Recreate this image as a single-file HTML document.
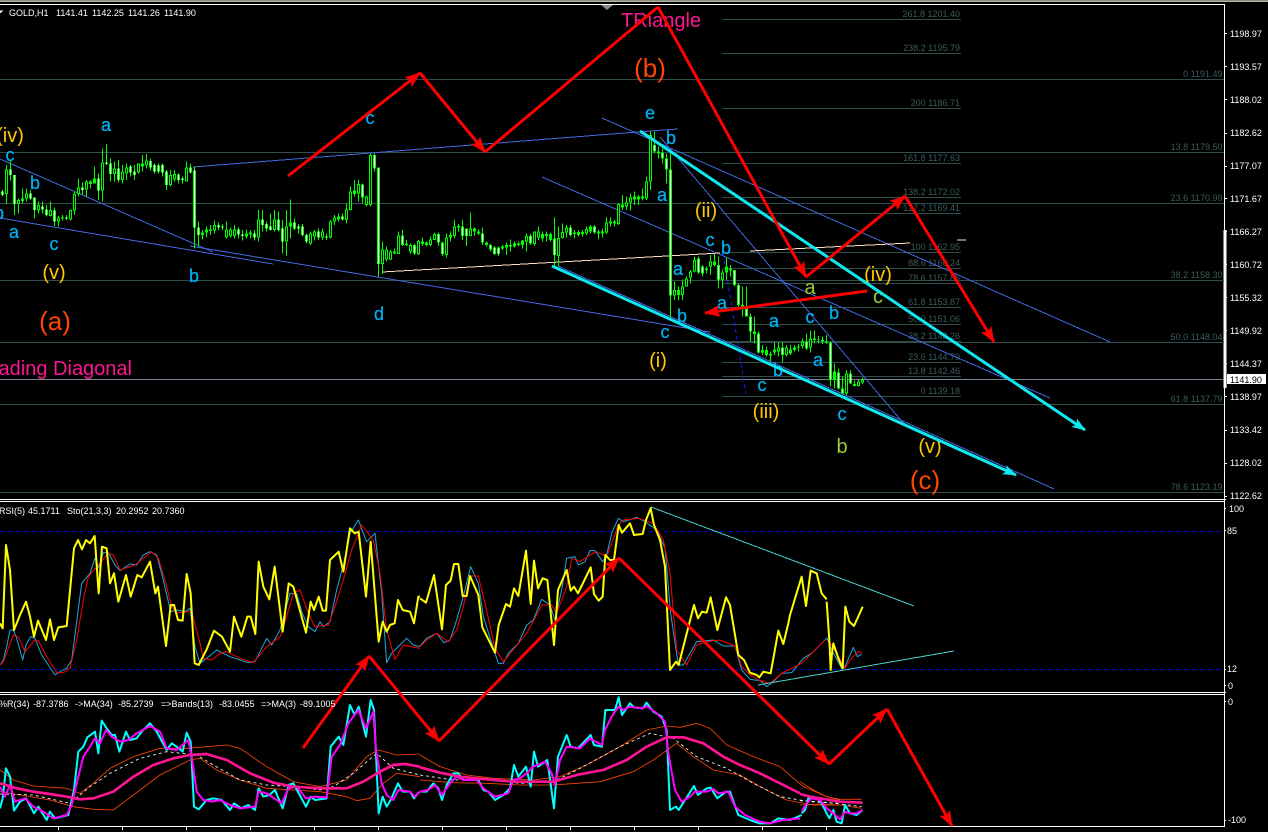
<!DOCTYPE html>
<html><head><meta charset="utf-8"><title>GOLD,H1</title>
<style>
html,body{margin:0;padding:0;background:#000;width:1268px;height:832px;overflow:hidden}
svg{display:block;position:absolute;left:0;top:0}
text{font-family:"Liberation Sans",Arial,sans-serif}
.s{font-size:9px;fill:#fff}
.f{font-size:9px;fill:#3a5c5c;text-anchor:end}
.l{font-size:18px;text-anchor:middle}
.bl{fill:#00b0f5;stroke:#00b0f5;stroke-width:.25px}
.y{fill:#ffc800;font-size:20px}
.o{fill:#ff4500;font-size:26px}
.g{fill:#9acd32}
.p{fill:#ff1493;font-size:20px}
.ln{fill:none;shape-rendering:crispEdges}
.aa{fill:none;stroke-linejoin:round}
</style></head><body>
<svg width="1268" height="832" viewBox="0 0 1268 832" xmlns="http://www.w3.org/2000/svg">
<defs>
<marker id="ar" markerUnits="userSpaceOnUse" markerWidth="18" markerHeight="14" refX="15" refY="6" orient="auto"><path d="M0 0L16 6L0 12L3 6z" fill="#f00"/></marker>
<marker id="ac" markerUnits="userSpaceOnUse" markerWidth="18" markerHeight="14" refX="13" refY="5" orient="auto"><path d="M0 0L14 5L0 10L3 5z" fill="#10e8f0"/></marker>
<clipPath id="cm"><rect x="0" y="5" width="1224" height="494"/></clipPath>
<clipPath id="c2"><rect x="0" y="502" width="1224" height="190"/></clipPath>
<clipPath id="c3"><rect x="0" y="695" width="1224" height="131"/></clipPath>
</defs>
<rect width="1268" height="832" fill="#000"/>
<rect width="1268" height="1" fill="#8f8c80"/><rect y="1" width="1268" height="1" fill="#b5b2a6"/>

<!-- frames -->
<g class="ln" stroke="#fff" stroke-width="1">
<path d="M0 4.5H1224.5V826.5H0"/>
<path d="M0 499.5H1226M0 501.5H1224M0 692.5H1226M0 694.5H1224"/>
<path d="M1224 33.5h3M1224 66.5h3M1224 99.5h3M1224 133.5h3M1224 166.5h3M1224 198.5h3M1224 231.5h3M1224 264.5h3M1224 297.5h3M1224 330.5h3M1224 363.5h3M1224 396.5h3M1224 430.5h3M1224 463.5h3M1224 496.5h3M1224 508.5h2M1224 530.5h2M1224 669.5h2M1224 685.5h2M1224 701.5h2M1224 820.5h2"/>
<path d="M58.500 826v4M122.500 826v4M186.500 826v4M250.500 826v4M314.500 826v4M378.500 826v4M442.500 826v4M506.500 826v4M570.500 826v4M634.500 826v4M698.500 826v4M762.500 826v4M826.500 826v4"/>
</g>
<rect x="1223.500" y="230" width="3" height="158" fill="#fff"/>

<!-- fibs -->
<g class="ln" stroke="#2f4f4f" stroke-width="1">
<path d="M0 79.500H1224M0 152.500H1224M0 203.500H1224M0 280.500H1224M0 342.500H1224M0 404.500H1224M0 492.500H1224"/>
<path d="M722 19.500H961M722 53.500H961M722 108.500H961M722 163.500H961M722 197.500H961M722 213.500H961M722 252.500H961M722 268.500H961M722 283.500H961M722 307.500H961M722 324.500H961M722 341.500H961M722 362.500H961M722 376.500H961M722 396.500H961"/>
</g>
<path class="ln" stroke="#778899" d="M0 379.500H1224"/>
<path d="M601 5h12l-6 5z" fill="#8a8a8a"/>

<g class="f">
<text x="1222.500" y="77">0 1191.49</text><text x="1222.500" y="150">13.8 1179.50</text><text x="1222.500" y="201">23.6 1170.99</text><text x="1222.500" y="278">38.2 1158.30</text><text x="1222.500" y="340">50.0 1148.04</text><text x="1222.500" y="402">61.8 1137.79</text><text x="1222.500" y="490">78.6 1123.19</text>
<text x="960" y="17">261.8 1201.40</text><text x="960" y="51">238.2 1195.79</text><text x="960" y="106">200 1186.71</text><text x="960" y="161">161.8 1177.63</text><text x="960" y="195">138.2 1172.02</text><text x="960" y="211">127.2 1169.41</text><text x="960" y="250">100 1162.95</text><text x="960" y="266">88.6 1160.24</text><text x="960" y="281">78.6 1157.85</text><text x="960" y="305">61.8 1153.87</text><text x="960" y="322">50.0 1151.06</text><text x="960" y="339">38.2 1148.26</text><text x="960" y="360">23.6 1144.79</text><text x="960" y="374">13.8 1142.46</text><text x="960" y="394">0 1139.18</text>
</g>

<g clip-path="url(#cm)">
<!-- thin trendlines -->
<g class="ln" stroke="#4169e1" stroke-width="1">
<path d="M0 159L213 252"/><path d="M0 218L273 264"/><path d="M190 246L710 332"/>
<path d="M193 167L650 131L678 129"/><path d="M602 118L1110 342"/><path d="M660 137L905 425"/>
<path d="M542 177L1050 398"/><path d="M558 266L1054 489"/>
</g>
<path class="ln" stroke="#1a1aff" stroke-dasharray="4 3" d="M723 253L746 394"/>
<path class="ln" stroke="#ffdfc0" d="M382 272L720 253M750 251L910 243M957 240H966"/>

<!-- candles: first stretch -->
<g transform="translate(-.167 0) scale(.33333)" class="ln">
<path stroke="#0f0" stroke-width="3" d="M8 570V590M20 495V612M32 480V542M44 525V645M56 595V640M68 565V610M80 565V605M92 570V600M104 592V655M116 605V640M128 605V640M140 615V650M152 605V650M164 622V678M176 648V680M188 645V662M200 645V660M212 628V662M224 575V645M236 535V590M248 548V585M260 540V590M272 540V565M284 500V550M296 520V600M308 445V605M320 432V495M332 475V545M344 485V545M356 480V548M368 495V550M380 490V540M392 495V530M404 495V540M416 490V520M428 465V515M440 462V505M452 475V512M464 490V520M476 490V520M488 490V530M500 510V570M512 510V560M524 510V545M536 520V550M548 530V550M560 485V545M572 490V520M584 500V745M596 665V740M608 690V718M620 680V712M632 675V705M644 662V700M656 668V690M668 672V690M680 665V715M692 682V712M704 675V715M716 682V715M728 690V722M740 688V715M752 690V715M764 690V722M776 630V725M788 630V695M800 665V695M812 640V692M824 630V695M836 635V695M848 660V760M860 630V768M872 598V715M884 655V690M896 672V700M908 672V710M920 700V730M932 695V735M944 690V722M956 685V720M968 685V720M980 700V720M992 660V715M1004 645V675M1016 640V665M1028 640V662M1040 610V670M1052 560V632M1064 540V590M1076 538V605"/>
<path id="u1" stroke="#0f0" stroke-width="10" d="M20 508V582M56 600V612M68 595V603M80 580V595M116 615V632M152 630V648M176 652V665M188 652V656M212 630V658M224 582V632M236 562V582M260 545V568M272 545V552M284 535V550M308 487V572M344 505V522M368 515V540M380 502V520M416 490V518M428 490V500M440 482V497M512 525V555M524 522V538M560 502V545M608 697V705M620 688V698M632 688V693M644 675V692M680 688V712M692 688V708M704 688V708M740 700V710M752 697V703M776 658V712M824 658V690M860 680V725M872 668V680M932 700V730M944 695V710M968 695V712M992 665V713M1004 652V665M1016 650V658M1040 628V660M1052 575V630M1064 572V582M1076 552V580"/>
<path stroke="#000" stroke-width="3" d="M20 511V579M56 603V609M80 583V592M116 618V629M152 633V645M176 655V662M212 633V655M224 585V629M236 565V579M260 548V565M308 490V569M344 508V519M368 518V537M380 505V517M416 493V515M440 485V494M512 528V552M524 525V535M560 505V542M644 678V689M680 691V709M692 691V705M704 691V705M776 661V709M824 661V687M860 683V722M932 703V727M944 698V707M968 698V709M992 668V710M1004 655V662M1040 631V657M1052 578V627M1076 555V577"/>
<path stroke="#0f0" stroke-width="10" d="M8 575V585M32 508V525M44 525V612M92 580V595M104 592V630M128 620V628M140 628V645M164 632V665M200 652V655M248 562V570M296 535V572M320 487V492M332 490V522M356 505V540M392 500V518M404 515V525M452 483V503M464 495V515M476 497V515M488 495V518M500 515V555M536 524V540M548 535V540M572 502V517M584 512V682M596 682V705M656 675V682M668 680V683M716 688V703M728 703V708M764 700V713M788 658V675M800 672V685M812 680V690M836 658V690M848 685V725M884 668V685M896 680V685M908 680V705M920 705V725M956 695V712M980 710V713M1028 650V658"/>
<path stroke="#fff" stroke-width="3" d="M8 575V585M32 508V525M44 525V612M92 580V595M104 592V630M128 620V628M140 628V645M164 632V665M200 652V655M248 562V570M296 535V572M320 487V492M332 490V522M356 505V540M392 500V518M404 515V525M452 483V503M464 495V515M476 497V515M488 495V518M500 515V555M536 524V540M548 535V540M572 502V517M584 512V682M596 682V705M656 675V682M668 680V683M716 688V703M728 703V708M764 700V713M788 658V675M800 672V685M812 680V690M836 658V690M848 685V725M884 668V685M896 680V685M908 680V705M920 705V725M956 695V712M980 710V713M1028 650V658"/>
</g>

<!-- candles: middle stretch -->
<g transform="translate(359.833 130) scale(.33333)" class="ln">
<path stroke="#0f0" stroke-width="3" d="M8 160V220M20 197V230M32 70V230M44 70V125M56 112V440M68 335V432M80 350V395M92 360V390M104 355V372M116 305V372M128 300V348M140 330V348M152 340V372M164 340V375M176 330V375M188 322V348M200 335V350M212 320V348M224 308V330M236 308V348M248 335V378M260 310V382M272 305V335M284 270V325M296 282V305M308 270V330M320 295V348M332 248V318M344 292V318M356 298V315M368 292V345M380 335V350M392 342V365M404 348V375M416 350V378M428 345V360M440 338V375M452 328V365M464 335V352M476 335V350M488 330V355M500 310V365M512 312V345M524 304V348M536 290V330M548 305V335M560 305V335M572 308V335M584 262V410M596 290V408M608 280V325M620 285V322M632 285V320M644 300V325M656 300V320M668 300V320M680 290V315M692 285V310M704 285V312M716 300V328M728 295V322M740 262V312M752 262V290M764 270V290M776 220V285M788 195V240M800 200V240M812 190V242M824 185V225M836 195V225M848 175V212"/>
<path stroke="#0f0" stroke-width="10" d="M8 163V203M20 200V225M32 75V225M44 75V115M56 112V402M68 358V402M80 358V388M92 365V388M104 365V370M116 316V372M128 316V345M140 340V345M152 345V365M164 345V370M176 333V372M188 335V342M200 338V345M212 328V345M224 312V330M236 312V338M248 338V372M260 322V375M272 315V322M284 290V318M296 288V292M308 290V318M320 295V318M332 295V318M344 295V305M356 305V310M368 310V338M380 338V345M392 345V358M404 352V372M416 352V372M428 350V355M440 345V352M452 345V350M464 340V350M476 340V345M488 332V345M500 318V335M512 318V340M524 304V342M536 304V322M548 312V325M560 312V318M572 312V330M584 326V375M596 324V378M608 306V324M620 292V308M632 292V315M644 308V312M656 306V315M668 306V312M680 297V310M692 290V305M704 290V308M716 305V310M728 305V310M740 277V308M752 275V280M764 275V280M776 222V282M788 223V232M800 218V230M812 202V218M824 200V208M836 200V208M848 200V205"/>
<path stroke="#000" stroke-width="3" d="M20 203V222M32 78V222M68 361V399M80 361V385M92 368V385M116 319V369M152 348V362M176 336V369M212 331V342M224 315V327M260 325V372M284 293V315M332 298V315M500 321V332M524 307V339M536 307V319M596 327V375M608 309V321M620 295V305M680 300V307M740 280V305M776 225V279M800 221V227M812 205V215"/>
<path stroke="#fff" stroke-width="3" d="M8 165V200M44 78V112M56 114V400M128 320V342M164 348V367M236 315V335M248 340V370M308 292V315M320 297V316M368 312V336M392 347V356M404 354V370M416 354V370M512 320V338M584 328V373M632 294V313M704 292V306"/>
</g>

<!-- candles: last stretch -->
<g transform="translate(639.833 120) scale(.33333)" class="ln">
<path stroke="#0f0" stroke-width="3" d="M8 205V238M20 170V240M32 35V210M44 35V100M56 80V115M68 85V130M80 100V190M92 95V595M104 485V540M116 500V542M128 478V540M140 470V500M152 450V490M164 410V458M176 410V462M188 435V470M200 440V460M212 405V465M224 400V440M236 410V505M248 450V505M260 412V480M272 435V470M284 450V500M296 490V570M308 500V590M320 500V590M332 580V665M344 590V670M356 635V700M368 675V705M380 680V710M392 695V725M404 668V705M416 668V710M428 668V728M440 675V710M452 675V705M464 675V695M476 672V695M488 655V685M500 640V690M512 632V698M524 632V670M536 648V670M548 650V672M560 645V672M572 665V800M584 730V805M596 745V808M608 770V822M620 750V825M632 750V792M644 782V800M656 780V800M668 772V792"/>
<path stroke="#0f0" stroke-width="10" d="M8 230V235M20 185V235M32 45V185M44 75V95M56 95V100M68 97V115M80 115V148M92 148V527M104 510V527M116 510V525M128 500V525M140 475V500M152 455V472M164 420V455M176 415V458M188 440V460M200 445V450M212 425V440M224 425V435M236 435V480M248 458V480M260 440V458M272 445V452M284 450V495M296 495V555M308 555V562M320 565V590M332 590V635M344 635V642M356 640V698M368 690V698M380 690V705M392 702V706M404 688V698M416 682V695M428 682V705M440 682V705M452 688V700M464 682V690M476 680V683M488 665V678M500 665V685M512 655V682M524 655V660M536 658V660M548 660V664M560 665V668M572 668V780M584 755V780M596 758V805M608 805V820M620 760V820M632 760V790M644 792V798M656 785V798M668 778V788"/>
<path stroke="#000" stroke-width="3" d="M20 188V232M32 48V182M104 513V524M128 503V522M140 478V497M152 458V469M164 423V452M212 428V437M248 461V477M416 685V692M440 685V702M488 668V675M512 658V679M620 763V817M656 788V795M668 781V785"/>
<path stroke="#fff" stroke-width="3" d="M44 78V92M68 100V112M80 118V145M92 151V524M176 418V455M188 443V457M236 438V477M284 453V492M296 498V552M320 568V587M332 593V632M356 643V695M428 685V702M500 668V682M572 671V777M596 761V802M608 808V817M632 763V787"/>
</g>

<!-- labels -->
<g class="l bl">
<text x="106" y="131">a</text><text x="10" y="161">c</text><text x="35" y="189">b</text><text x="-1" y="219">b</text><text x="14" y="238">a</text><text x="54" y="250">c</text><text x="194" y="282">b</text><text x="379" y="320">d</text><text x="370" y="124">c</text><text x="650" y="119">e</text><text x="671" y="144">b</text><text x="662" y="201">a</text><text x="710" y="246">c</text><text x="726" y="254">b</text><text x="678" y="275">a</text><text x="722" y="309">a</text><text x="682" y="322">b</text><text x="665" y="338">c</text><text x="774" y="327">a</text><text x="810" y="323">c</text><text x="834" y="319">b</text><text x="778" y="376">b</text><text x="818" y="366">a</text><text x="762" y="391">c</text><text x="842" y="420">c</text>
</g>
<g class="l y">
<text x="10" y="142" class="y">(iv)</text><text x="54" y="279" class="y">(v)</text><text x="706" y="217" class="y">(ii)</text><text x="658" y="367" class="y">(i)</text><text x="766" y="418" class="y">(iii)</text><text x="878" y="281" class="y">(iv)</text><text x="930" y="453" class="y">(v)</text>
</g>
<g class="l g" style="font-size:20px"><text x="842" y="453">b</text><text x="810" y="294">a</text><text x="878" y="303">c</text></g>
<g class="l o"><text x="55" y="330" class="o">(a)</text><text x="650" y="77" class="o">(b)</text><text x="925" y="489" class="o">(c)</text></g>
<text x="621" y="27" class="p">TRiangle</text>
<text x="132" y="375" class="p" text-anchor="end">Leading Diagonal</text>

<!-- thick lines -->
<g class="ln" stroke="#10e8f0" stroke-width="3" style="shape-rendering:auto">
<path d="M640 131L1085 430" marker-end="url(#ac)"/>
<path d="M552 266L1016 475" marker-end="url(#ac)"/>
</g>
</g>

<g fill="none" stroke="#f00" stroke-width="3">
<path d="M288 176L420 73" marker-end="url(#ar)"/>
<path d="M420 73L485 152" marker-end="url(#ar)"/>
<path d="M485 152L658 7"/>
<path d="M658 7L806 277" marker-end="url(#ar)"/>
<path d="M806 277L905 196" marker-end="url(#ar)"/>
<path d="M905 196L994 342" marker-end="url(#ar)"/>
<path d="M867 291L705 313" marker-end="url(#ar)"/>
</g>

<!-- RSI/Sto panel -->
<g clip-path="url(#c2)">
<path class="ln" stroke="#0000d8" stroke-dasharray="4 4" d="M0 531.500H1224M0 669.500H1224"/>
<g transform="translate(0 490) scale(.33333)" class="aa">
<polyline stroke="#1ea8e0" stroke-width="3" points="0,525 10,510 20,470 30,420 40,420 50,445 68,510 78,465 92,440 105,445 125,495 165,555 180,545 200,535 215,510 232,380 245,280 270,250 285,205 296,232 310,188 325,188 345,225 360,242 390,222 410,225 430,195 450,185 470,195 490,270 512,365 530,360 555,365 570,355 585,470 600,520 620,505 650,480 690,500 720,510 745,518 765,515 800,445 815,465 840,420 870,310 890,310 905,365 925,410 945,425 960,395 970,410 990,395 1010,300 1030,225 1050,130 1075,90 1100,155 1125,130 1145,310 1160,518 1175,490 1195,470 1220,445 1240,465 1260,470"/>
<polyline stroke="#f00" stroke-width="3" points="0,525 10,515 40,435 55,440 75,485 105,450 115,452 140,500 170,548 190,548 210,535 230,450 250,330 265,260 295,225 325,190 340,195 360,240 375,235 405,225 430,205 455,185 475,205 495,270 515,350 530,368 575,365 600,460 610,505 635,510 660,490 680,485 720,505 760,518 800,470 840,440 860,380 880,310 900,300 925,370 945,410 985,405 1005,350 1030,270 1055,180 1085,105 1120,150 1140,250 1160,420 1185,508 1210,465 1260,475"/>
<polyline stroke="#ff0" stroke-width="6" points="0,400 8,415 18,165 30,240 42,420 60,375 78,335 90,380 102,440 114,392 138,450 150,388 162,450 175,412 200,408 222,175 234,150 246,178 258,150 270,160 284,138 296,310 306,170 320,175 330,280 342,250 355,335 378,255 392,320 412,255 425,262 450,215 466,310 474,290 498,468 512,345 522,345 534,390 548,392 560,252 572,310 584,520 596,525 620,478 642,422 666,440 690,485 702,380 724,440 742,380 752,380 766,432 776,215 790,290 808,328 824,230 848,425 866,280 880,290 918,428 932,335 942,360 956,320 968,362 978,362 990,210 1016,185 1030,245 1050,115 1064,130 1076,125 1098,320 1112,155 1136,455 1148,395 1160,425 1170,405 1184,400 1194,330 1208,360 1230,365 1242,400 1255,320 1260,320"/>
</g>
<g transform="translate(420 490) scale(.33333)" class="aa">
<polyline stroke="#1ea8e0" stroke-width="3" points="0,468 20,445 50,430 72,458 90,450 110,390 130,320 152,230 175,280 190,380 225,490 235,520 250,520 265,490 295,460 320,405 340,390 350,365 365,328 390,345 405,390 425,300 440,205 465,200 475,225 495,215 510,182 525,182 548,215 560,195 575,130 595,85 610,95 650,82 675,95 710,120 735,175 752,370 775,525 790,525 830,455 880,450 910,468 945,468 965,540 990,568 1020,572 1040,590 1060,575 1085,550 1115,548 1150,505 1175,490 1220,445"/>
<polyline stroke="#f00" stroke-width="3" points="0,470 20,450 50,430 85,455 110,420 130,350 150,258 175,258 195,340 225,475 250,515 275,485 320,430 350,375 365,345 395,345 410,370 440,290 455,205 480,215 510,195 530,185 560,200 595,105 610,90 655,85 700,100 730,150 750,250 770,480 800,525 830,465 860,455 900,450 945,468 965,530 990,555 1020,572 1050,580 1085,550 1145,520 1175,490 1215,450"/>
<polyline stroke="#ff0" stroke-width="6" points="0,325 18,338 42,255 66,418 78,285 92,272 102,222 115,222 128,318 140,318 150,258 175,315 187,412 225,488 236,405 258,342 270,350 282,295 295,318 318,182 332,342 342,212 354,295 368,265 382,270 402,465 414,300 440,240 452,302 462,290 474,310 512,232 522,312 536,332 548,320 556,195 570,210 582,210 596,105 606,128 630,100 642,135 668,132 678,90 692,55 702,105 720,150 735,230 750,540 768,515 776,525 822,345 834,385 846,365 860,368 872,322 892,420 918,322 930,345 955,495 972,510 990,548 1010,555 1018,562 1030,545 1052,550 1075,422 1090,462 1105,400 1110,375 1145,260 1158,348 1172,242 1190,250 1205,310 1220,328"/>
</g>
<g transform="translate(800 560) scale(.33333)" class="aa">
<polyline stroke="#1ea8e0" stroke-width="3" points="80,232 95,270 125,325 135,320 160,262 172,290 185,282"/>
<polyline stroke="#f00" stroke-width="3" points="85,240 110,280 125,305 135,325 150,300 175,275 187,278"/>
<polyline stroke="#ff0" stroke-width="6" points="80,125 88,240 92,330 96,280 100,250 115,295 128,325 136,140 148,185 162,198 188,140"/>
</g>
<path class="ln" d="M651 507L914 606M758 685L954 651" stroke="#48d1cc" stroke-width="1"/>
</g>

<!-- WPR panel -->
<g clip-path="url(#c3)">
<g transform="translate(0 490) scale(.33333)" class="aa">
<polyline stroke="#ff4500" stroke-width="2.500" points="0,840 40,870 100,888 200,895 240,910 280,880 330,835 400,800 480,775 560,775 620,770 680,765 720,775 800,830 880,875 960,890 1040,870 1100,800 1135,780 1190,795 1260,792"/>
<polyline stroke="#ff4500" stroke-width="2.500" points="0,905 60,915 150,930 220,950 280,958 340,960 400,915 480,855 570,810 600,805 650,840 720,870 800,895 880,900 960,905 1040,920 1070,932 1110,925 1150,880 1190,850 1260,860"/>
<polyline stroke="#fff" stroke-width="2.500" stroke-dasharray="9 9" points="0,912 100,915 210,940 270,890 330,850 420,805 500,785 590,795 640,825 720,870 800,885 880,890 960,900 1000,890 1060,850 1130,790 1180,835 1260,855"/>
<polyline stroke="#0ff" stroke-width="6" points="0,955 8,925 18,835 30,860 42,962 60,935 78,925 102,970 115,950 140,990 150,965 165,985 205,975 222,900 235,785 250,770 262,742 285,725 295,790 305,692 320,715 335,735 345,735 358,785 378,725 390,750 410,745 425,725 450,700 470,725 500,780 515,760 530,770 548,785 560,728 572,755 582,950 596,958 620,930 640,925 665,930 690,960 702,940 724,955 745,945 765,960 776,895 790,920 808,915 825,900 848,955 866,885 880,880 918,950 932,920 945,930 980,925 992,770 1016,740 1030,765 1050,645 1064,675 1076,650 1098,740 1112,630 1122,660 1136,970 1148,920 1160,950 1172,930 1194,880 1208,905 1230,905 1242,925 1258,905"/>
<polyline stroke="#f0f" stroke-width="6" points="0,890 15,920 30,885 45,935 75,925 100,950 130,965 160,985 200,975 215,945 230,880 250,800 270,770 285,745 300,760 318,720 335,740 360,755 385,750 410,730 450,708 480,725 500,775 530,780 565,750 575,800 590,905 610,930 635,935 660,930 690,945 720,955 765,950 776,905 800,910 845,940 866,895 890,890 918,925 945,920 980,922 995,800 1020,765 1045,700 1075,660 1098,715 1120,665 1128,780 1145,880 1160,915 1180,930 1195,900 1230,905 1245,920 1258,905"/>
<polyline stroke="#ff1493" stroke-width="8" points="0,880 50,895 100,905 150,912 200,920 240,928 280,925 340,905 400,860 460,825 520,805 570,795 620,792 680,810 750,850 820,878 880,890 960,895 1040,895 1090,875 1140,845 1180,825 1215,822 1260,830"/>
</g>
<g transform="translate(420 490) scale(.33333)" class="aa">
<polyline stroke="#ff4500" stroke-width="2.500" points="0,795 60,830 140,855 220,865 340,870 420,860 500,825 600,770 680,720 740,708 780,712 830,700 870,715 920,765 1000,800 1080,830 1150,890 1220,920 1260,930"/>
<polyline stroke="#ff4500" stroke-width="2.500" points="0,870 100,878 200,880 300,885 400,885 470,880 540,875 640,845 700,810 770,760 820,800 880,840 960,855 1020,890 1100,930 1180,945 1260,945"/>
<polyline stroke="#fff" stroke-width="2.500" stroke-dasharray="9 9" points="0,855 100,870 200,868 300,880 400,875 480,835 600,770 690,730 760,745 830,800 920,835 1000,880 1080,920 1170,935 1260,940"/>
<polyline stroke="#0ff" stroke-width="6" points="0,905 20,905 40,880 55,895 66,930 80,885 100,850 115,850 130,870 175,870 190,900 205,905 225,930 250,915 270,895 282,825 295,860 318,830 332,890 342,785 354,830 382,810 402,955 414,800 440,735 452,770 474,775 512,735 522,765 546,770 556,660 585,660 596,622 606,675 630,640 642,652 668,655 680,638 700,665 725,680 740,720 750,960 768,950 776,960 822,888 834,915 860,895 872,893 892,925 918,905 930,905 955,975 990,990 1018,1000 1052,1000 1075,985 1110,990 1145,975"/>
<polyline stroke="#f0f" stroke-width="6" points="0,905 25,900 45,885 66,915 90,880 110,860 130,870 170,870 190,895 225,920 265,910 280,870 300,865 320,850 340,830 375,815 395,850 405,885 420,810 440,770 480,775 510,745 545,765 555,720 575,680 595,650 610,660 630,650 668,655 680,648 710,670 735,695 745,790 765,900 785,935 810,920 825,905 860,905 880,897 895,910 925,905 945,950 975,975 1018,995 1050,1000 1090,990 1140,985"/>
<polyline stroke="#ff1493" stroke-width="8" points="0,832 60,848 120,860 200,868 280,875 400,875 470,855 550,840 620,810 680,770 740,742 790,742 850,760 910,800 960,825 1020,850 1080,880 1140,910"/>
</g>
<g transform="translate(800 780) scale(.33333)" class="aa">
<polyline stroke="#ff4500" stroke-width="2.500" points="0,5 40,30 80,50 120,58 185,58"/>
<polyline stroke="#ff4500" stroke-width="2.500" points="0,75 60,72 120,75 185,85"/>
<polyline stroke="#fff" stroke-width="2.500" stroke-dasharray="9 9" points="0,62 60,65 120,72 185,80"/>
<polyline stroke="#0ff" stroke-width="6" points="5,100 15,90 25,55 40,50 60,60 80,100 88,115 100,90 110,125 125,130 135,75 150,100 170,105 188,90"/>
<polyline stroke="#f0f" stroke-width="6" points="5,95 20,70 35,55 60,60 80,85 100,100 120,118 135,95 150,100 170,100 188,90"/>
<polyline stroke="#ff1493" stroke-width="8" points="0,42 30,50 60,55 120,65 188,68"/>
</g>
</g>

<!-- red over panels -->
<g fill="none" stroke="#f00" stroke-width="3">
<path d="M303 748L369 656" marker-end="url(#ar)"/>
<path d="M369 656L439 741" marker-end="url(#ar)"/>
<path d="M439 741L619 558" marker-end="url(#ar)"/>
<path d="M619 558L829 764" marker-end="url(#ar)"/>
<path d="M829 764L887 709" marker-end="url(#ar)"/>
<path d="M887 709L952 826" marker-end="url(#ar)"/>
</g>

<!-- headers -->
<path d="M0 10.500h3.500l-3.500 3z" fill="#fff"/>
<g class="s">
<text x="9" y="16">GOLD,H1</text><text x="56" y="16">1141.41</text><text x="92" y="16">1142.25</text><text x="128" y="16">1141.26</text><text x="164" y="16">1141.90</text>
<text x="-1" y="514">RSI(5)</text><text x="28" y="514">45.1711</text><text x="67" y="514">Sto(21,3,3)</text><text x="116" y="514">20.2952</text><text x="152" y="514">20.7360</text>
<text x="-1" y="707">%R(34)</text><text x="33" y="707">-87.3786</text><text x="75" y="707">-&gt;MA(34)</text><text x="118" y="707">-85.2739</text><text x="161" y="707">=&gt;Bands(13)</text><text x="219" y="707">-83.0455</text><text x="261" y="707">=&gt;MA(3)</text><text x="300" y="707">-89.1005</text>
</g>

<!-- axis -->
<g class="s">
<text x="1230" y="37">1198.97</text><text x="1230" y="70">1193.57</text><text x="1230" y="103">1188.02</text><text x="1230" y="136">1182.62</text><text x="1230" y="169">1177.07</text><text x="1230" y="202">1171.67</text><text x="1230" y="235">1166.27</text><text x="1230" y="268">1160.72</text><text x="1230" y="301">1155.32</text><text x="1230" y="334">1149.92</text><text x="1230" y="367">1144.37</text><text x="1230" y="400">1138.97</text><text x="1230" y="433">1133.42</text><text x="1230" y="466">1128.02</text><text x="1230" y="499">1122.62</text>
<text x="1229" y="512">100</text><text x="1227" y="534">85</text><text x="1227" y="672">12</text><text x="1228" y="689">0</text><text x="1228" y="705">0</text><text x="1228" y="823">-100</text>
</g>
<rect x="1227" y="374" width="39" height="10" fill="#fff"/>
<text x="1230" y="383" class="s" style="fill:#000">1141.90</text>
</svg>
</body></html>
